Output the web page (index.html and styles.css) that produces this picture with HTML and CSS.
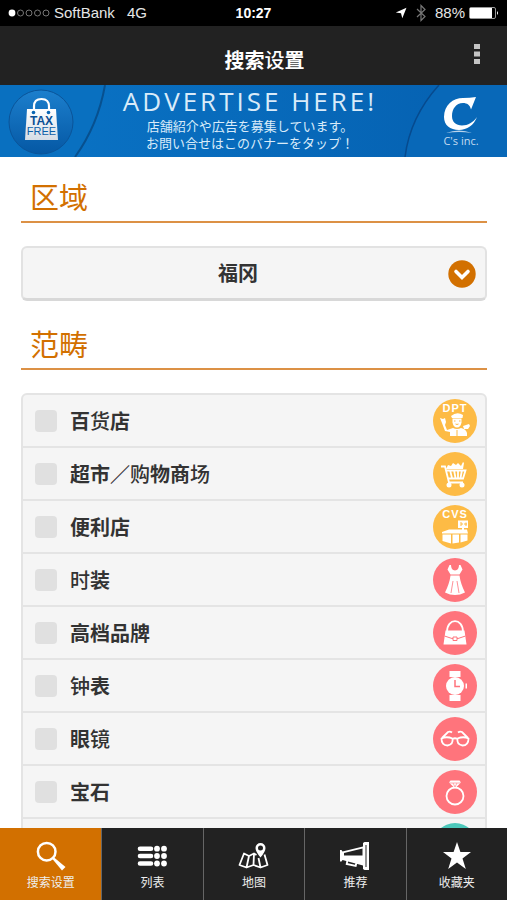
FILE: index.html
```html
<!DOCTYPE html>
<html lang="zh-CN">
<head>
<meta charset="utf-8">
<meta name="viewport" content="width=device-width, initial-scale=1">
<title>搜索设置</title>
<link rel="stylesheet" href="styles.css">
</head>
<body>
<div class="status">
  <div class="status-left">
    <svg class="signal" viewBox="0 0 42 10" aria-hidden="true">
      <circle cx="4" cy="5" r="3.4" fill="#fff"/>
      <g fill="none" stroke="#777" stroke-width="1"><circle cx="12.500" cy="5" r="3"/><circle cx="21" cy="5" r="3"/><circle cx="29.500" cy="5" r="3"/><circle cx="38" cy="5" r="3"/></g>
    </svg>
    <span>SoftBank</span>
    <span class="network">4G</span>
  </div>
  <time class="clock">10:27</time>
  <div class="status-right">
    <svg class="arrow" viewBox="0 0 12 12" aria-hidden="true"><path d="M11.500.8 7.300 11.200 6 6.300.8 5.500Z" fill="#fff"/></svg>
    <svg class="bluetooth" viewBox="0 0 12 18" aria-hidden="true"><path d="M2 5l8 7.500L6 16.500v-15L10 5.500 2 13" fill="none" stroke="#777" stroke-width="1.200"/></svg>
    <span>88%</span>
    <svg class="battery" viewBox="0 0 30 12" aria-hidden="true"><rect x=".5" y=".5" width="26" height="11" rx="1.500" fill="none" stroke="#999"/><rect x="1" y="1" width="22" height="10" fill="#fff"/><path d="M28 4v4q2-2 0-4Z" fill="#fff"/></svg>
  </div>
</div>

<header class="topbar">
  <h1>搜索<span class="thin">设</span>置</h1>
  <button class="menu" type="button" aria-label="菜单">
    <svg viewBox="0 0 6 22" aria-hidden="true"><path d="M0 1h6v5H0zM0 8.500h6v5H0zM0 16h6v5H0z" fill="#c4c4c4"/></svg>
  </button>
</header>

<a class="banner" href="#">
  <svg class="banner-left" viewBox="0 0 108 72" aria-hidden="true">
    <defs>
      <linearGradient id="badge" x1="0" y1="0" x2="0" y2="1"><stop offset="0" stop-color="#1c7fcd"/><stop offset="1" stop-color="#0558a4"/></linearGradient>
      <linearGradient id="bag" x1="0" y1="0" x2="0" y2="1"><stop offset="0" stop-color="#fff"/><stop offset="1" stop-color="#d5dde6"/></linearGradient>
    </defs>
    <path d="M0 0h105q-7 40-30 72H0Z" fill="#0970c0"/>
    <path d="M105 0q-7 40-30 72" fill="none" stroke="#07508f" stroke-width="2"/>
    <circle cx="41" cy="37" r="32" fill="url(#badge)" stroke="#0a5499"/>
    <path d="M34 28v-6.500q0-7.500 7.500-7.500t7.500 7.500V28" fill="none" stroke="#fff" stroke-width="2.200"/>
    <path d="M27 24h29l2 31H25Z" fill="url(#bag)"/>
    <circle cx="33.500" cy="27.500" r="1.800" fill="#0b66b3"/><circle cx="48.500" cy="27.500" r="1.800" fill="#0b66b3"/>
    <text x="41.500" y="40" class="tax">TAX</text>
    <text x="41.500" y="50" class="free">FREE</text>
  </svg>
  <span class="banner-copy">
    <strong>ADVERTISE HERE!</strong>
    <span lang="ja">店舗紹介や広告を募集しています。</span>
    <span lang="ja">お問い合せはこのバナーをタップ！</span>
  </span>
  <svg class="banner-right" viewBox="0 0 104 72" aria-hidden="true">
    <path d="M104 0H36Q7 32 2 72h102Z" fill="#0868b8"/>
    <path d="M36 0Q7 32 2 72" fill="none" stroke="#064a8e" stroke-width="1.500"/>
    <path d="M73 12 68 24.500C67 20 64 18 60 18c-7 0-11 6-11 13 0 6 4 9.500 10 9.500s11-3 15-8.500c-3 8-10 13-18 13-9 0-15-5-15-13 0-12 9-19 19-19q7 0 13-1Z" fill="#fff"/>
    <path d="M43 48q13-5 26 0-13-2-26 0Z" fill="#b9d4ec"/>
    <text x="58" y="60" class="inc">C's inc.</text>
  </svg>
</a>

<main class="content">
  <section>
    <h2><label for="area">区域</label></h2>
    <div class="picker">
      <select id="area"><option>福冈</option></select>
      <svg viewBox="0 0 28 28" aria-hidden="true"><circle cx="14" cy="14" r="13.700" fill="#d27000"/><path d="M8 11.500l6 6 6-6" fill="none" stroke="#fff" stroke-width="3.600" stroke-linecap="round"/></svg>
    </div>
  </section>

  <section>
    <h2>范畴</h2>
    <div class="list">
      <label class="row"><input type="checkbox"><span class="name">百<span class="thin">货</span>店</span>
        <svg class="badge yellow" viewBox="0 0 44 44" aria-hidden="true"><circle cx="22" cy="22" r="22"/><text x="22" y="13">DPT</text>
          <g fill="#fff"><path d="M18 17q6-5 12-1l-.5 3H19Z"/><path d="M19.500 19.500h9v4q-1 5-4.500 5t-4.500-5Z"/><path d="M7 19l3 1 2-1 1 4-1 3 2 5 6-2q4 2 8 0 5 1 6 5v3H17v-4l-5-1-3-8Z"/><path d="M30 27l6-2 1 2-2 3h-4Z"/></g>
          <path d="M21 22h1.500M26 22h1.500M22.500 25q1.500 1 3 0M24 31v6" stroke="#fdbb45" stroke-width="1" fill="none"/></svg></label>
      <label class="row"><input type="checkbox"><span class="name">超市／<span class="thin">购</span>物商<span class="thin">场</span></span>
        <svg class="badge yellow" viewBox="0 0 44 44" aria-hidden="true"><circle cx="22" cy="22" r="22"/>
          <g fill="#fff"><path d="M13 17l2-4 3 1 2-3 3 2 2-2 3 3 2-4 1 1-1 6Z"/><circle cx="16" cy="33" r="2.500"/><circle cx="29" cy="33" r="2.500"/></g>
          <path d="M8 14.500h4l4 16h14M12.500 18.500h20l-2.500 8H15.500M17 18l2 8M21 18l1.500 8M25 18v8M29 18l-1.500 8" stroke="#fff" stroke-width="1.800" fill="none"/></svg></label>
      <label class="row"><input type="checkbox"><span class="name">便利店</span>
        <svg class="badge yellow" viewBox="0 0 44 44" aria-hidden="true"><circle cx="22" cy="22" r="22"/><text x="22" y="13">CVS</text>
          <path d="M25 15.500h10v7.500H25ZM29 23h2v3h-2ZM9 27l7-2.500h18l1 4H9ZM9.500 29.500h8.500v9l-8.500-2.500ZM19.500 29.500h6.500v8l-6.500 1ZM27.500 29.500h7v6l-7 2Z" fill="#fff"/><path d="M27 18h2v2h-2M33 17.500v3.500M31 19h3" fill="none" stroke="#fdbb45"/></svg></label>
      <label class="row"><input type="checkbox"><span class="name"><span class="thin">时</span>装</span>
        <svg class="badge pink" viewBox="0 0 44 44" aria-hidden="true"><circle cx="22" cy="22" r="22"/>
          <path d="M16.500 7h1.500q0 5 4 5.500Q26 12 26 7h1.500l2 4.500-3 5h-9l-3-5ZM17.500 17.500h9q1 8 5.500 17-10 5-20 0 4.500-9 5.500-17Z" fill="#fff"/><path d="M20 23l-2 12M24 23l2 12" stroke="#ff747c" stroke-width=".8"/></svg></label>
      <label class="row"><input type="checkbox"><span class="name">高档品牌</span>
        <svg class="badge pink" viewBox="0 0 44 44" aria-hidden="true"><circle cx="22" cy="22" r="22"/>
          <path d="M14 21c0-14.500 16-14.500 16 0" fill="none" stroke="#fff" stroke-width="1.800"/><path d="M12.500 19.500h19L33.500 33.500h-23Z" fill="#fff"/><path d="M11.500 25l7.500 2.500h6l7.500-2.500" fill="none" stroke="#ff747c"/><path d="M20 26h4v3.500h-4Z" fill="#fff" stroke="#ff747c"/></svg></label>
      <label class="row"><input type="checkbox"><span class="name"><span class="thin">钟</span>表</span>
        <svg class="badge pink" viewBox="0 0 44 44" aria-hidden="true"><circle cx="22" cy="22" r="22"/>
          <path d="M16.500 7h11v6h-11ZM16.500 31h11v6h-11ZM32.500 19.500h1.500v5h-1.500Z" fill="#fff"/><circle cx="22" cy="22" r="9" fill="#fff"/><path d="M22 16v6.500h5" fill="none" stroke="#ff747c" stroke-width="1.500"/></svg></label>
      <label class="row"><input type="checkbox"><span class="name">眼<span class="thin">镜</span></span>
        <svg class="badge pink" viewBox="0 0 44 44" aria-hidden="true"><circle cx="22" cy="22" r="22"/>
          <g fill="none" stroke="#fff" stroke-width="1.800"><path d="M8.500 21.500q5-2.500 11 0 1 6-5 7-6 0-6-7ZM24.500 21.500q6-2.500 11 0 0 7-6 7-6-1-5-7ZM19.500 22q2.500-1.500 5 0M9 21l6-6q2-1 4 .5M35 21l-6-6q-2-1-4 .5"/></g></svg></label>
      <label class="row"><input type="checkbox"><span class="name">宝石</span>
        <svg class="badge pink" viewBox="0 0 44 44" aria-hidden="true"><circle cx="22" cy="22" r="22"/>
          <circle cx="22" cy="26" r="8.500" fill="none" stroke="#fff" stroke-width="1.800"/><path d="M17.500 10.500h9l1.500 2-6 6-6-6Z" fill="#fff"/><path d="M16 13h12M20 13l2 4 2-4" fill="none" stroke="#ff747c" stroke-width=".6"/></svg></label>
      <label class="row"><input type="checkbox" aria-label="其他"><span class="name"></span>
        <svg class="badge teal" viewBox="0 0 44 44" aria-hidden="true"><circle cx="22" cy="22" r="22"/></svg></label>
    </div>
  </section>
</main>

<nav class="tabs">
  <a class="active" href="#" aria-current="page">
    <svg viewBox="0 0 40 32" aria-hidden="true"><circle cx="15.700" cy="11.700" r="8.800" fill="none" stroke="#fff" stroke-width="2.500"/><path d="M21 18.500l1.500-1.500 12 10-3.500 3.500Z" fill="#fff"/></svg>
    <span>搜索设置</span></a>
  <a href="#">
    <svg viewBox="0 0 40 32" aria-hidden="true"><g stroke="#fff" stroke-width="4.600" stroke-linecap="round"><path d="M7 8.700h11M7 16h11M7 23.500h11"/></g><g fill="#fff"><circle cx="24" cy="8.700" r="2.900"/><circle cx="31" cy="8.700" r="2.900"/><circle cx="24" cy="16" r="2.900"/><circle cx="31" cy="16" r="2.900"/><circle cx="24" cy="23.500" r="2.900"/><circle cx="31" cy="23.500" r="2.900"/></g></svg>
    <span>列表</span></a>
  <a href="#">
    <svg viewBox="0 0 40 32" aria-hidden="true"><g fill="none" stroke="#fff" stroke-width="1.800" stroke-linejoin="round"><path d="M22.500 15l-2.500-1.500-5 2.500-5-2.500L5.500 25l7 2.500 7-2.500 7 2.500L33.500 25 30.500 14.500M15 16l-2.500 11.500M20 13.500l-.5 11.500M24.500 18l2 9.500"/></g><path d="M26.500 17.500q-5-6-5-9.500a5 5 0 0 1 10 0q0 3.500-5 9.500Zm0-12a2.500 2.500 0 1 0 0 5 2.500 2.500 0 0 0 0-5Z" fill="#fff" fill-rule="evenodd"/></svg>
    <span>地图</span></a>
  <a href="#">
    <svg viewBox="0 0 40 32" aria-hidden="true"><path d="M5 10h1.500l1 1.500L28 6.500V3l1.500-1H34v28h-4.500L28 29v-3.500L7.500 20l-1 1.500H5ZM9 13v2.500h18.500V8.500ZM30.500 5v22h1V5Z" fill="#fff" fill-rule="evenodd"/><path d="M12.500 20l-.8 4 9 2 .8-3.500" fill="none" stroke="#fff" stroke-width="1.800"/></svg>
    <span>推荐</span></a>
  <a href="#">
    <svg viewBox="0 0 40 32" aria-hidden="true"><path d="M20 2l3.400 10H34l-8.500 6.400L28.800 29 20 22.600 11.200 29l3.300-10.600L6 12h10.600Z" fill="#fff"/></svg>
    <span>收藏夹</span></a>
</nav>
</body>
</html>
```
FILE: styles.css
```css
* {
  box-sizing: border-box;
}

body {
  margin: 0;
  height: 100vh;
  display: flex;
  flex-direction: column;
  background: #fff;
  color: #333;
  font-family: "Noto Sans CJK SC", "Liberation Sans", sans-serif;
}

svg {
  display: block;
  flex: none;
}

a {
  color: inherit;
  text-decoration: none;
}

.thin {
  font-weight: 500;
}

/* Status bar */
.status {
  display: grid;
  grid-template-columns: 1fr auto 1fr;
  align-items: center;
  flex: none;
  height: 26px;
  padding: 0 8px;
  background: #000;
  color: #e6e6e6;
  font: 15px/26px "Liberation Sans", sans-serif;
}

.status-left,
.status-right {
  display: flex;
  align-items: center;
  gap: 4px;
}

.status-right {
  justify-content: flex-end;
}

.signal {
  width: 42px;
  height: 10px;
}

.network {
  margin-left: 8px;
}

.clock {
  color: #fff;
  font-size: 14px;
  font-weight: 700;
}

.arrow {
  width: 12px;
  height: 12px;
}

.bluetooth {
  width: 12px;
  height: 18px;
  margin: 0 4px;
}

.battery {
  width: 30px;
  height: 12px;
}

/* Title bar */
.topbar {
  display: grid;
  grid-template-columns: 1fr auto 1fr;
  align-items: center;
  flex: none;
  height: 59px;
  padding: 0 19px;
  background: #222;
  color: #fff;
}

.topbar h1 {
  grid-column: 2;
  margin: 8px 0 0 22px;
  font-size: 20px;
  line-height: 28px;
}

.menu {
  justify-self: end;
  margin-bottom: 3px;
  padding: 8px;
  border: 0;
  background: none;
}

.menu svg {
  width: 6px;
  height: 22px;
}

/* Banner */
.banner {
  display: flex;
  justify-content: space-between;
  flex: none;
  height: 72px;
  background: linear-gradient(90deg, #0a74c6, #0560b0);
  color: #d9ebf9;
}

.banner-left {
  width: 108px;
  height: 72px;
}

.banner-right {
  width: 104px;
  height: 72px;
}

.banner-copy {
  display: flex;
  flex-direction: column;
  align-items: center;
  padding-right: 11px;
  white-space: nowrap;
  font: 13px/17px "Noto Sans CJK JP", sans-serif;
}

.banner-copy strong {
  font: 400 26px/32px "Open Sans", sans-serif;
  letter-spacing: 3px;
}

.tax,
.free,
.inc {
  font-family: "Liberation Sans", sans-serif;
  text-anchor: middle;
}

.tax {
  fill: #0b4f94;
  font-size: 12px;
  font-weight: 700;
}

.free {
  fill: #0b5ea8;
  font-size: 11px;
}

.inc {
  fill: #c5dcf0;
  font-family: "Open Sans", sans-serif;
  font-size: 11px;
}

/* Content */
.content {
  flex: 1;
  min-height: 0;
  padding: 19px 20px 0 21px;
  overflow-y: auto;
  scrollbar-width: none;
}

section + section {
  margin-top: 22px;
}

h2 {
  margin: 0 0 23px;
  padding: 0 9px 5px;
  border-bottom: 2px solid #dc9145;
  color: #d27000;
  font-size: 29px;
  font-weight: 400;
  line-height: 40px;
}

.picker {
  display: grid;
  align-items: center;
}

.picker select,
.picker svg {
  grid-area: 1 / 1;
}

.picker select {
  appearance: none;
  width: 100%;
  height: 55px;
  padding: 0 40px 0 8px;
  border: 2px solid #e2e2e2;
  border-bottom: 3px solid #d8d8d8;
  border-radius: 6px;
  background: #f5f5f5;
  color: #333;
  font: 700 20px/28px "Noto Sans CJK SC", sans-serif;
  text-align: center;
  text-align-last: center;
}

.picker svg {
  justify-self: end;
  width: 28px;
  height: 28px;
  margin-right: 11px;
  pointer-events: none;
}

.list {
  border: 2px solid #e4e4e4;
  border-radius: 6px;
  background: #f5f5f5;
}

.row {
  display: flex;
  align-items: center;
  gap: 13px;
  height: 53px;
  padding: 0 8px 0 12px;
  border-bottom: 2px solid #e4e4e4;
}

.row input {
  appearance: none;
  flex: none;
  width: 22px;
  height: 22px;
  margin: 0;
  border-radius: 4px;
  background: #e0e0e0;
}

.name {
  flex: 1;
  font-size: 20px;
  font-weight: 700;
  line-height: 28px;
}

.badge {
  width: 44px;
  height: 44px;
}

.badge text {
  fill: #fff;
  font: 700 11px "Liberation Sans", sans-serif;
  letter-spacing: 1px;
  text-anchor: middle;
}

.yellow > circle:first-child {
  fill: #fdbb45;
}

.pink > circle:first-child {
  fill: #ff747c;
}

.teal > circle:first-child {
  fill: #4cc8bb;
}

/* Tab bar */
.tabs {
  display: grid;
  grid-template-columns: repeat(5, 1fr);
  flex: none;
  background: #222;
  color: #eee;
}

.tabs a {
  display: flex;
  flex-direction: column;
  align-items: center;
  padding: 12px 0 8px;
  font-size: 12px;
  line-height: 20px;
}

.tabs a + a {
  border-left: 1px solid #666;
}

.tabs .active {
  background: #d27000;
}

.tabs svg {
  width: 40px;
  height: 32px;
}
```
